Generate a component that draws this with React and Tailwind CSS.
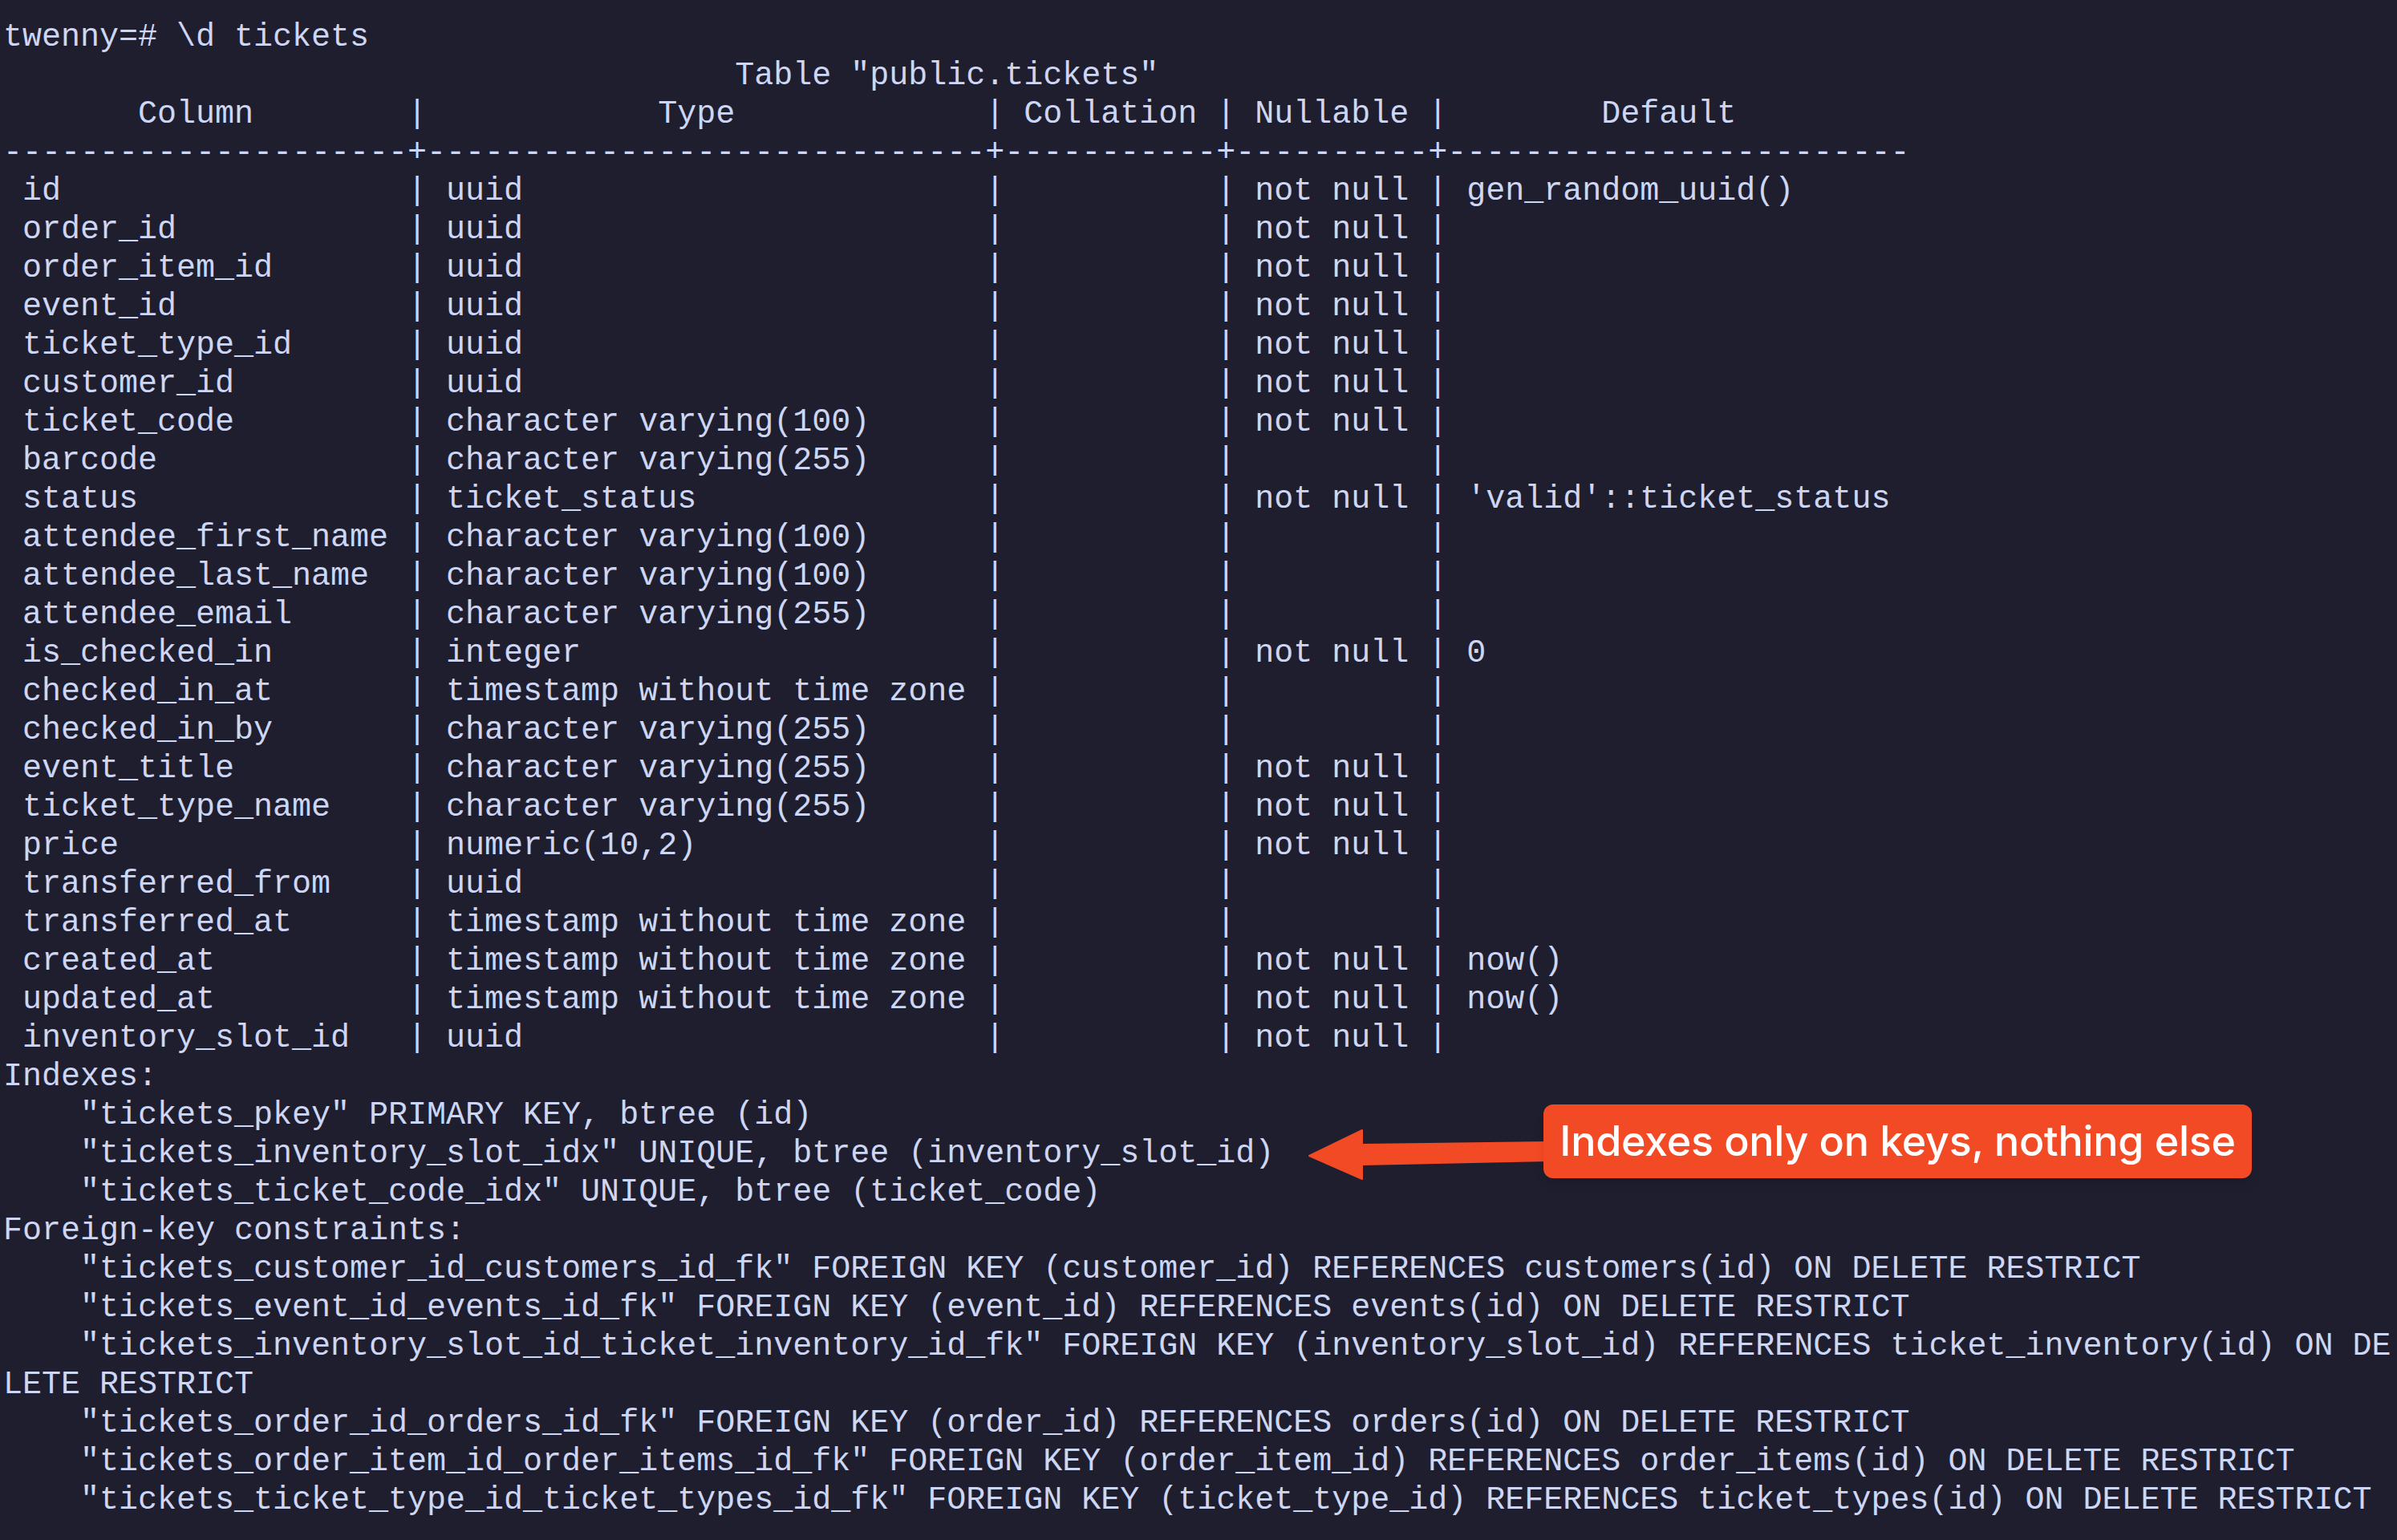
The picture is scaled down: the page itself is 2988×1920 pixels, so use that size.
import React from "react";

const columns = [
  ["id", "uuid", "not null", "gen_random_uuid()"],
  ["order_id", "uuid", "not null", ""],
  ["order_item_id", "uuid", "not null", ""],
  ["event_id", "uuid", "not null", ""],
  ["ticket_type_id", "uuid", "not null", ""],
  ["customer_id", "uuid", "not null", ""],
  ["ticket_code", "character varying(100)", "not null", ""],
  ["barcode", "character varying(255)", "", ""],
  ["status", "ticket_status", "not null", "'valid'::ticket_status"],
  ["attendee_first_name", "character varying(100)", "", ""],
  ["attendee_last_name", "character varying(100)", "", ""],
  ["attendee_email", "character varying(255)", "", ""],
  ["is_checked_in", "integer", "not null", "0"],
  ["checked_in_at", "timestamp without time zone", "", ""],
  ["checked_in_by", "character varying(255)", "", ""],
  ["event_title", "character varying(255)", "not null", ""],
  ["ticket_type_name", "character varying(255)", "not null", ""],
  ["price", "numeric(10,2)", "not null", ""],
  ["transferred_from", "uuid", "", ""],
  ["transferred_at", "timestamp without time zone", "", ""],
  ["created_at", "timestamp without time zone", "not null", "now()"],
  ["updated_at", "timestamp without time zone", "not null", "now()"],
  ["inventory_slot_id", "uuid", "not null", ""],
];

// psql-ish column widths
const W = [19, 27, 9, 8, 22];

const center = (s, w) => {
  const left = Math.floor((w - s.length) / 2);
  return " ".repeat(left) + s + " ".repeat(w - s.length - left);
};

const header =
  " " +
  ["Column", "Type", "Collation", "Nullable", "Default"]
    .map((h, i) => center(h, W[i]))
    .join(" | ");

const divider = W.map((w) => "-".repeat(w + 2)).join("+");

const rows = columns.map(
  ([name, type, nullable, def]) =>
    " " +
    [name.padEnd(W[0]), type.padEnd(W[1]), "".padEnd(W[2]), nullable.padEnd(W[3]), def].join(
      " | "
    )
);

const lines = [
  "twenny=# \\d tickets",
  " ".repeat(38) + 'Table "public.tickets"',
  header,
  divider,
  ...rows,
  "Indexes:",
  '    "tickets_pkey" PRIMARY KEY, btree (id)',
  '    "tickets_inventory_slot_idx" UNIQUE, btree (inventory_slot_id)',
  '    "tickets_ticket_code_idx" UNIQUE, btree (ticket_code)',
  "Foreign-key constraints:",
  '    "tickets_customer_id_customers_id_fk" FOREIGN KEY (customer_id) REFERENCES customers(id) ON DELETE RESTRICT',
  '    "tickets_event_id_events_id_fk" FOREIGN KEY (event_id) REFERENCES events(id) ON DELETE RESTRICT',
  '    "tickets_inventory_slot_id_ticket_inventory_id_fk" FOREIGN KEY (inventory_slot_id) REFERENCES ticket_inventory(id) ON DE',
  "LETE RESTRICT",
  '    "tickets_order_id_orders_id_fk" FOREIGN KEY (order_id) REFERENCES orders(id) ON DELETE RESTRICT',
  '    "tickets_order_item_id_order_items_id_fk" FOREIGN KEY (order_item_id) REFERENCES order_items(id) ON DELETE RESTRICT',
  '    "tickets_ticket_type_id_ticket_types_id_fk" FOREIGN KEY (ticket_type_id) REFERENCES ticket_types(id) ON DELETE RESTRICT',
];

export default function App() {
  return (
    <div className="relative w-[2988px] h-[1920px] overflow-hidden bg-[#1e1e2e] pt-[23px] pl-[4px]">
      {/* Terminal output */}
      <div className="font-['Liberation_Mono',monospace] text-[40px] leading-[48px] text-[#cdd6f4] whitespace-pre">
        {lines.map((line, i) => (
          <div key={i} className="h-[48px]">
            {line}
          </div>
        ))}
      </div>

      {/* Annotation arrow */}
      <svg
        className="absolute left-[1620px] top-[1400px]"
        width="320"
        height="80"
        viewBox="0 0 320 80"
      >
        <polygon
          points="12,41 78,9 78,27 310,24 310,47 78,52 78,70"
          fill="#f34a26"
          strokeLinejoin="round"
          stroke="#f34a26"
          strokeWidth="2"
        />
      </svg>

      {/* Annotation label */}
      <div className="absolute left-[1924px] top-[1377px] w-[883px] h-[92px] rounded-[12px] bg-[#f34a26] flex items-center justify-center shadow-lg">
        <span className="font-['Inter','Liberation_Sans',sans-serif] font-medium text-[52px] text-white tracking-[-0.3px]">
          Indexes only on keys, nothing else
        </span>
      </div>
    </div>
  );
}
